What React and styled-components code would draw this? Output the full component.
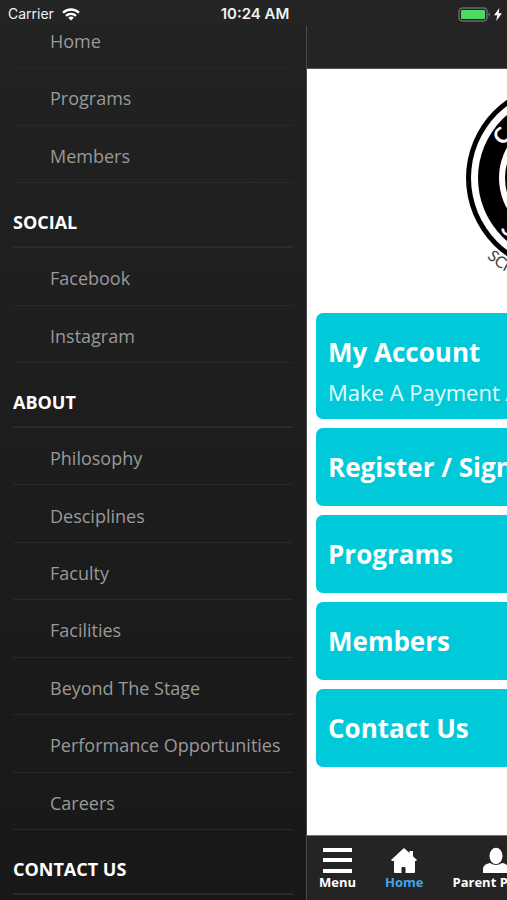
import React from "react";
import styled, { createGlobalStyle } from "styled-components";

const GlobalStyle = createGlobalStyle`
  * { box-sizing: border-box; }
  body { margin: 0; background: #242424; font-family: "Open Sans", "Noto Sans", sans-serif; }
  h2, p, ul { margin: 0; padding: 0; }
  ul { list-style: none; }
  a { color: inherit; text-decoration: none; }
`;

const Screen = styled.div`
  display: flex;
  height: 100vh;
  overflow: hidden;
`;

const StatusBar = styled.header`
  position: fixed;
  inset: 0 0 auto;
  z-index: 2;
  display: grid;
  grid-template-columns: 1fr auto 1fr;
  align-items: center;
  height: 26px;
  padding: 2px 5px 0 8px;
  background: #242424;
  color: #f2f2f2;
  font: 400 14px/20px Inter, sans-serif;
`;

const StatusGroup = styled.div`
  display: flex;
  align-items: center;
  justify-content: ${(p) => (p.$end ? "flex-end" : "flex-start")};
  gap: ${(p) => (p.$end ? 3 : 8)}px;
`;

const Clock = styled.time`
  font-size: 15px;
  font-weight: 600;
`;

const Drawer = styled.nav`
  flex: 0 0 307px;
  overflow: hidden;
  padding: 11px 13px 0;
  background: linear-gradient(#222, #181818);
  border-right: 1px solid #4a4a4a;
`;

const MenuList = styled.ul`
  display: grid;
  grid-auto-rows: 1fr;
  min-height: ${(p) => p.$height}px;
`;

const MenuItem = styled.li`
  display: flex;
  align-items: center;
  padding: 4px 0 0 37px;
  border-bottom: 1px solid #292929;
  color: #999;
  font-size: 18px;
  line-height: 24px;
  white-space: nowrap;
`;

const MenuHeading = styled.h2`
  height: 65px;
  padding-top: 27px;
  border-bottom: 2px solid #2b2b2b;
  color: #fff;
  font-size: 18px;
  font-weight: 700;
  line-height: 24px;
`;

const Page = styled.div`
  flex: 0 0 100vw;
  display: flex;
  flex-direction: column;
  background: #fff;
`;

const TitleBar = styled.div`
  flex: none;
  height: 69px;
  background: #242424;
  border-bottom: 1px solid #555;
`;

const Content = styled.main`
  flex: 1;
  min-height: 0;
  padding: 0 9px;
`;

const Logo = styled.svg`
  display: block;
  width: 260px;
  height: 244px;
  margin: 0 auto;
`;

const Cards = styled.div`
  display: grid;
  gap: 9px;
`;

const Card = styled.a`
  display: flex;
  flex-direction: column;
  justify-content: center;
  min-height: 78px;
  padding: ${(p) => (p.$tall ? "19px 12px 7px" : "0 12px")};
  border-radius: 7px;
  background: #00c9da;
  color: #fff;
  white-space: nowrap;
`;

const CardTitle = styled.span`
  font-size: 26px;
  font-weight: 700;
  line-height: 40px;
`;

const CardText = styled.span`
  font-size: 22px;
  line-height: 40px;
  color: #e4fbfd;
`;

const TabBar = styled.nav`
  flex: none;
  display: flex;
  gap: 29px;
  height: 65px;
  padding: 11px 12px 0;
  background: #242424;
  border-top: 1px solid #777;
`;

const Tab = styled.button`
  display: flex;
  flex-direction: column;
  align-items: center;
  justify-content: flex-start;
  padding: 0;
  border: 0;
  background: none;
  color: ${(p) => (p.$active ? "#41a5ea" : "#fff")};
  font: 700 13px/18px "Open Sans", sans-serif;
  white-space: nowrap;

  svg {
    height: 26px;
    fill: #fff;
  }
`;

const menuSections = [
  { height: 172, items: ["Home", "Programs", "Members"] },
  { title: "SOCIAL", height: 115, items: ["Facebook", "Instagram"] },
  {
    title: "ABOUT",
    height: 402,
    items: ["Philosophy", "Desciplines", "Faculty", "Facilities", "Beyond The Stage", "Performance Opportunities", "Careers"],
  },
  { title: "CONTACT US", height: 0, items: [] },
];

const cards = [
  { title: "My Account", text: "Make A Payment And More" },
  { title: "Register / Sign Up" },
  { title: "Programs" },
  { title: "Members" },
  { title: "Contact Us" },
];

function WifiIcon() {
  return (
    <svg width="18" height="13" viewBox="0 0 18 13" fill="none" stroke="#fff" strokeWidth="2.3" aria-label="Wi-Fi">
      <path d="M1 4.8a11.4 11.4 0 0 1 16 0M4 7.9a7.1 7.1 0 0 1 10 0" />
      <path d="M9 12.6 6.2 9.8a4 4 0 0 1 5.6 0Z" fill="#fff" stroke="none" />
    </svg>
  );
}

function BatteryIcon() {
  return (
    <svg width="33" height="15" viewBox="0 0 33 15" aria-label="Battery">
      <rect x="1" y="1" width="28" height="13" rx="3.5" fill="none" stroke="#6b6b6b" strokeWidth="1.5" />
      <rect x="3" y="3" width="24" height="9" rx="1" fill="#4cd964" />
      <path d="M30.5 5.2c2 .6 2 4 0 4.6Z" fill="#6b6b6b" />
    </svg>
  );
}

function BoltIcon() {
  return (
    <svg width="8" height="13" viewBox="0 0 8 13" fill="#fff" aria-label="Charging">
      <path d="M5.4 0 0 7.3h3.3L2.2 13 8 5.3H4.6Z" />
    </svg>
  );
}

function SchoolLogo() {
  return (
    <Logo viewBox="-130 -109 260 244" role="img" aria-label="School logo">
      <defs>
        <path id="ringTop" d="M-65 0A65 65 0 0 1 65 0" />
        <path id="ringBottom" d="M-80 0A80 80 0 0 0 80 0" />
        <path id="outerArc" d="M-109 0A109 109 0 0 0 109 0" />
      </defs>
      <circle r="95" />
      <circle r="90" fill="#fff" />
      <circle r="83" />
      <circle r="62" fill="#fff" />
      <circle r="56" />
      <g fontFamily="Lato, sans-serif">
        <text fontSize="22" fontWeight="700" fill="#fff">
          <textPath href="#ringTop" startOffset="33">C</textPath>
        </text>
        <text fontSize="22" fontWeight="700" fill="#fff">
          <textPath href="#ringBottom" startOffset="56">S</textPath>
        </text>
        <text fontSize="16" fill="#444">
          <textPath href="#outerArc" startOffset="89">SCHOOL</textPath>
        </text>
      </g>
    </Logo>
  );
}

function MenuIcon() {
  return (
    <svg width="29" viewBox="0 0 29 26">
      <path d="M0 1h29v4H0zM0 11h29v4H0zM0 22h29v4H0z" />
    </svg>
  );
}

function HomeIcon() {
  return (
    <svg width="26" viewBox="0 0 26 26">
      <path d="M13 1 0 13l1 1h2V25q0 1 1 1h6.500v-5q0-1 1-1h2q1 0 1 1v5H23q1 0 1-1V14h1l1-1-4-3.700V4h-3.500v2.100Z" />
    </svg>
  );
}

function PersonIcon() {
  return (
    <svg width="26" viewBox="0 0 26 26">
      <ellipse cx="13" cy="9" rx="6.500" ry="8.200" />
      <path d="M0 26v-3c0-4 2-6 7-7q6 4 12 0c5 1 7 3 7 7v3Z" />
    </svg>
  );
}

export default function App() {
  return (
    <>
      <GlobalStyle />
      <StatusBar>
        <StatusGroup>
          <span>Carrier</span>
          <WifiIcon />
        </StatusGroup>
        <Clock>10:24 AM</Clock>
        <StatusGroup $end>
          <BatteryIcon />
          <BoltIcon />
        </StatusGroup>
      </StatusBar>
      <Screen>
        <Drawer>
          {menuSections.map((section) => (
            <React.Fragment key={section.title || "main"}>
              {section.title && <MenuHeading>{section.title}</MenuHeading>}
              {section.items.length > 0 && (
                <MenuList $height={section.height}>
                  {section.items.map((item) => (
                    <MenuItem key={item}>
                      <a href="#">{item}</a>
                    </MenuItem>
                  ))}
                </MenuList>
              )}
            </React.Fragment>
          ))}
        </Drawer>
        <Page>
          <TitleBar />
          <Content>
            <SchoolLogo />
            <Cards>
              {cards.map((card) => (
                <Card key={card.title} href="#" $tall={Boolean(card.text)}>
                  <CardTitle>{card.title}</CardTitle>
                  {card.text && <CardText>{card.text}</CardText>}
                </Card>
              ))}
            </Cards>
          </Content>
          <TabBar>
            <Tab type="button"><MenuIcon />Menu</Tab>
            <Tab type="button" $active><HomeIcon />Home</Tab>
            <Tab type="button"><PersonIcon />Parent Portal</Tab>
          </TabBar>
        </Page>
      </Screen>
    </>
  );
}
